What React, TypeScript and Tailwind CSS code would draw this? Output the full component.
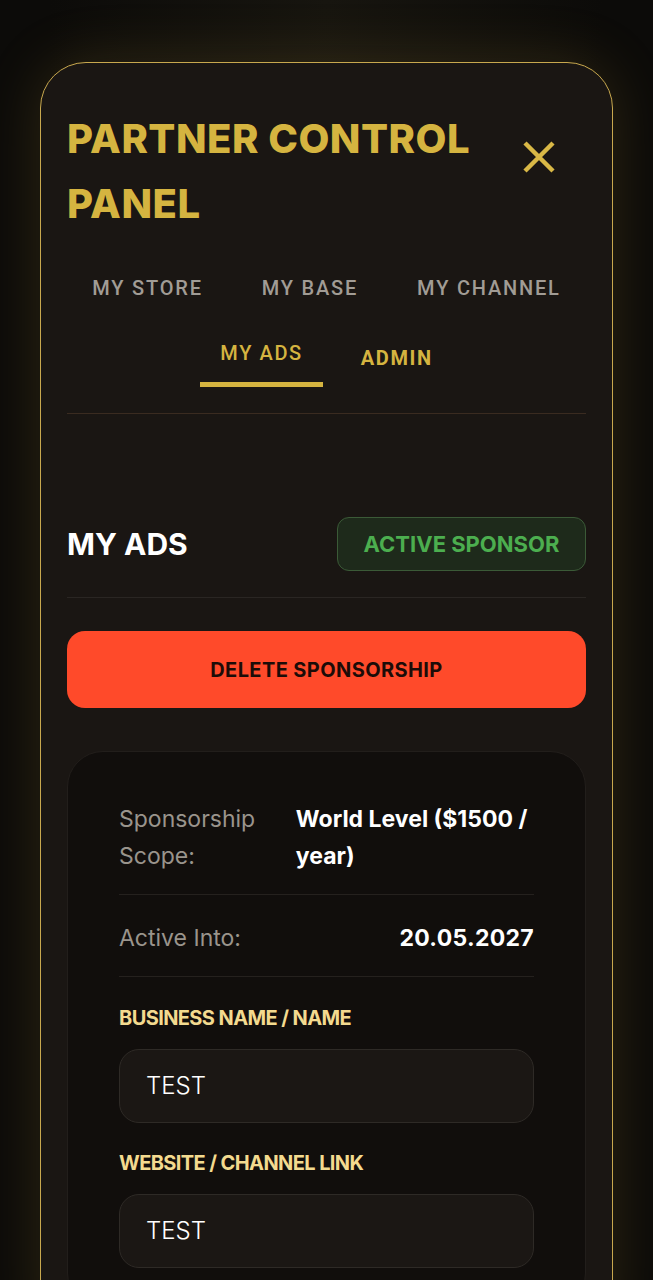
import React from "react";

export default function App() {
  const tabsRow1 = ["MY STORE", "MY BASE", "MY CHANNEL"];
  return (
    <div className="min-h-[1280px] w-full bg-[#0c0b09] bg-[radial-gradient(ellipse_at_50%_0%,#17150f_0%,#0c0b09_60%)] pt-[62px] px-[40px] overflow-hidden">
      <div
        className="rounded-[46px] border border-[#c8a84e] bg-[#1a1613] px-[26px] pt-[43px] pb-[40px] shadow-[0_0_60px_rgba(200,160,60,0.18)]"
        style={{ fontFamily: "Inter, 'Noto Sans', sans-serif" }}
      >
        {/* Header */}
        <div className="flex items-start justify-between">
          <h1 className="text-[40px] leading-[65px] font-extrabold text-[#d5b440] tracking-[0.5px]">
            PARTNER CONTROL
            <br />
            PANEL
          </h1>
          <button className="mt-[34px] mr-[30px]" aria-label="close">
            <svg width="34" height="34" viewBox="0 0 34 34" fill="none">
              <path d="M3 3L31 31M31 3L3 31" stroke="#d9b846" strokeWidth="4.5" strokeLinecap="butt" />
            </svg>
          </button>
        </div>

        {/* Tabs */}
        <div
          className="mt-[21px] border-b border-[#3a2b20] pb-[26px]"
          style={{ fontFamily: "Roboto, 'Liberation Sans', sans-serif" }}
        >
          <div className="flex justify-center gap-[19px]">
            {tabsRow1.map((t) => (
              <div
                key={t}
                className="px-[20px] h-[62px] flex items-center text-[20px] font-medium tracking-[1.8px] text-[#a19c95]"
              >
                {t}
              </div>
            ))}
          </div>
          <div className="mt-[6px] flex justify-center gap-[18px]">
            <div className="px-[20px] h-[62px] flex items-center border-b-[5px] border-[#d5b440] pb-[2px] text-[20px] font-medium tracking-[1.6px] text-[#d5b440]">
              MY ADS
            </div>
            <div className="px-[20px] h-[62px] flex items-center pt-[4px] text-[20px] font-bold tracking-[1.6px] text-[#d5b440]">
              ADMIN
            </div>
          </div>
        </div>

        {/* My Ads heading */}
        <div className="mt-[103px] flex items-center justify-between border-b border-[#2a2623] pb-[26px]">
          <h2 className="text-[30px] leading-[40px] font-bold text-white">MY ADS</h2>
          <div className="h-[54px] w-[249px] flex items-center justify-center rounded-[12px] border border-[#3b5a37] bg-[#1e2a1b] text-[22px] font-bold text-[#4cae4f]">
            ACTIVE SPONSOR
          </div>
        </div>

        {/* Delete button */}
        <button className="mt-[33px] h-[77px] w-full rounded-[18px] bg-[#ff4a2a] text-[20px] font-bold tracking-[0.4px] text-[#1c0c08]">
          DELETE SPONSORSHIP
        </button>

        {/* Inner card */}
        <div className="mt-[43px] rounded-[36px] border border-[#221e1b] bg-[#110e0c] px-[51px] pt-[31px] pb-[40px]">
          <div className="flex justify-between gap-[20px] border-b border-[#25211e] pt-[18px] pb-[19px] text-[23px] leading-[37px]">
            <div className="w-[160px] text-[#9a948c]">Sponsorship Scope:</div>
            <div className="w-[243px] font-bold text-white">World Level ($1500 / year)</div>
          </div>
          <div className="flex justify-between border-b border-[#25211e] pt-[25px] pb-[19px] text-[23px] leading-[37px]">
            <div className="text-[#9a948c]">Active Into:</div>
            <div className="font-bold tracking-[0.3px] text-white">20.05.2027</div>
          </div>

          <div className="mt-[29px] text-[20px] leading-[24px] font-bold tracking-[-0.6px] text-[#f3da8f]">
            BUSINESS NAME / NAME
          </div>
          <div className="mt-[19px] h-[74px] flex items-center rounded-[20px] border border-[#2e2a26] bg-[#1b1714] px-[26px] text-[24px] font-light text-white">
            TEST
          </div>

          <div className="mt-[28px] text-[20px] leading-[24px] font-bold tracking-[-0.6px] text-[#f3da8f]">
            WEBSITE / CHANNEL LINK
          </div>
          <div className="mt-[19px] h-[74px] flex items-center rounded-[20px] border border-[#2e2a26] bg-[#1b1714] px-[26px] text-[24px] font-light text-white">
            TEST
          </div>
        </div>
      </div>
    </div>
  );
}
